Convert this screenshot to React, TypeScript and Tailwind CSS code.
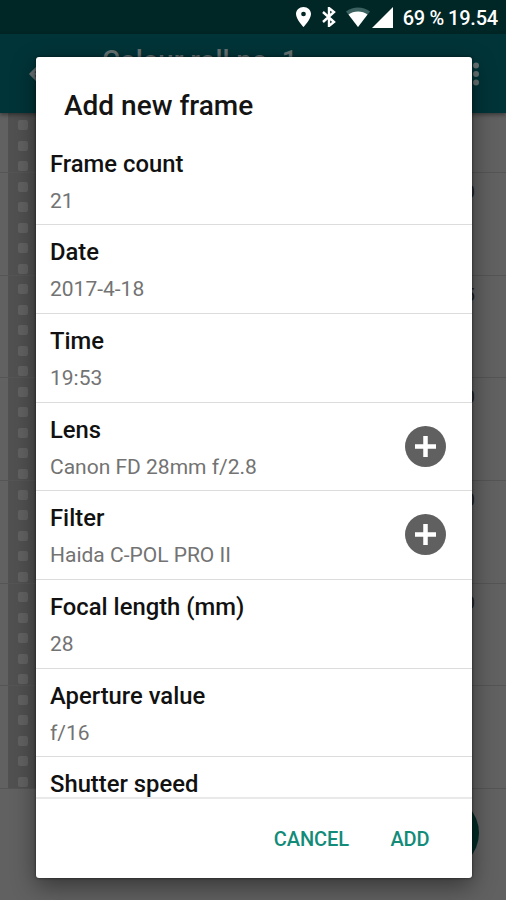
import { ReactNode } from "react";

interface Field {
	label: string;
	value: string;
	addable?: boolean;
}

const fields: Field[] = [
	{ label: "Frame count", value: "21" },
	{ label: "Date", value: "2017-4-18" },
	{ label: "Time", value: "19:53" },
	{ label: "Lens", value: "Canon FD 28mm f/2.8", addable: true },
	{ label: "Filter", value: "Haida C-POL PRO II", addable: true },
	{ label: "Focal length (mm)", value: "28" },
	{ label: "Aperture value", value: "f/16" },
	{ label: "Shutter speed", value: "" },
];

const frameDigits = ["0", "5", "0", "0", "0", ""];

function StatusBar() {
	return (
		<div className="flex h-[34px] items-center justify-end bg-[#002625] pr-2 text-white">
			<svg className="mr-[11px] h-[20px] w-[15px]" viewBox="5 2 14 20" preserveAspectRatio="none" fill="currentColor">
				<path d="M12 2C8.1 2 5 5.1 5 9c0 5.3 7 13 7 13s7-7.700 7-13c0-3.900-3.100-7-7-7zm0 9.200a2.200 2.200 0 1 1 0-4.400 2.200 2.200 0 0 1 0 4.400z" />
			</svg>
			<svg className="mr-[10px] h-[20px] w-[14px]" viewBox="5 2 14 20" preserveAspectRatio="none" fill="none" stroke="currentColor" strokeWidth="2.4">
				<path d="M6 7l11 10-5 4v-18L17 7 6 17" />
			</svg>
			<svg className="mr-[2px] h-[20px] w-[24px]" viewBox="0 0 24 20">
				<path d="M0 4.500C7-1 17-1 24 4.500L12 20z" fill="#3b6260" />
				<path d="M2.500 7.500c5-4 14-4 19 0L12 20z" fill="currentColor" />
			</svg>
			<svg className="mr-[10px] h-[21px] w-[21px]" viewBox="0 0 21 21" fill="currentColor">
				<path d="M21 0v21H0z" />
			</svg>
			<span className="pt-[1px] text-[20px] leading-none font-medium tracking-[-0.3px]">69 %</span>
			<span className="ml-[4px] pt-[1px] text-[20px] leading-none font-medium tracking-[-0.2px]">19.54</span>
		</div>
	);
}

function AppBar() {
	return (
		<div className="relative z-10 flex h-[79px] items-center bg-[#003438] text-[#687273] shadow-[0_2px_4px_rgba(0,0,0,0.4)]">
			<svg className="ml-[28px] h-6 w-6" viewBox="0 0 24 24" fill="none" stroke="currentColor" strokeWidth="3">
				<path d="M24 12H3M12 3l-9 9 9 9" />
			</svg>
			<h1 className="mb-[26px] ml-[50px] text-[27.6px] leading-8 font-medium whitespace-nowrap">
				Colour roll no. 1
			</h1>
			<svg className="mr-[26px] ml-auto h-6 w-[8px]" viewBox="0 0 8 24" fill="currentColor">
				<circle cx="4" cy="3.500" r="3" />
				<circle cx="4" cy="12" r="3" />
				<circle cx="4" cy="20.500" r="3" />
			</svg>
		</div>
	);
}

function FilmRow({ digit, first }: { digit: string; first?: boolean }) {
	return (
		<div
			className={
				first
					? "flex h-[60px] shrink-0 items-end border-b border-[#555555]"
					: "flex h-[102.65px] shrink-0 items-end border-b border-[#555555]"
			}
		>
			<div className="ml-[8px] flex h-full w-[36px] flex-col items-center justify-end gap-[10.5px] overflow-hidden bg-[#515151] pr-[7px] pb-[1px]">
				{(first ? [0, 1, 2] : [0, 1, 2, 3, 4]).map((i) => (
					<span key={i} className="size-[10px] shrink-0 rounded-[2px] bg-[#626262]" />
				))}
			</div>
			<span className="mr-[31px] ml-auto self-start pt-[8px] text-[19px] leading-[22px] text-[#202020]">
				{digit}
			</span>
		</div>
	);
}

function PlusIcon() {
	return (
		<svg className="size-[41px]" viewBox="0 0 41 41">
			<circle cx="20.500" cy="20.500" r="20.500" fill="#606060" />
			<path d="M20.500 10v21M10 20.500h21" stroke="white" strokeWidth="4.500" />
		</svg>
	);
}

function FieldRow({ field }: { field: Field }) {
	return (
		<div className="flex h-[88.65px] shrink-0 items-start justify-between border-b border-[#dcdcdc] pr-[25.5px] pl-[14px]">
			<div>
				<div className="pt-[13px] text-[23.8px] leading-[28px] font-medium text-[#111111]">{field.label}</div>
				<div className="mt-[11px] text-[21px] leading-[24px] text-[#737373]">{field.value}</div>
			</div>
			{field.addable && (
				<button className="mt-[23px]" aria-label={"Add " + field.label}>
					<PlusIcon />
				</button>
			)}
		</div>
	);
}

function DialogButton({ children }: { children: ReactNode }) {
	return <button className="text-[20px] leading-6 font-medium tracking-[-0.1px] text-[#128b78]">{children}</button>;
}

function FrameDialog() {
	return (
		<div className="absolute top-[57px] left-[36px] z-20 flex h-[821px] w-[435.5px] flex-col overflow-hidden rounded-[3px] bg-white shadow-[0_8px_24px_rgba(0,0,0,0.45),0_0_3px_rgba(0,0,0,0.6)]">
			<h2 className="h-[79.75px] shrink-0 pt-[32px] pl-[28px] text-[28px] leading-[34px] font-medium text-[#141414]">
				Add new frame
			</h2>
			<div className="flex h-[662.25px] shrink-0 flex-col overflow-hidden border-b-2 border-[#e9e9e9]">
				{fields.map((field) => (
					<FieldRow key={field.label} field={field} />
				))}
			</div>
			<div className="flex flex-1 items-center justify-end gap-[41.5px] pr-[42px]">
				<DialogButton>CANCEL</DialogButton>
				<DialogButton>ADD</DialogButton>
			</div>
		</div>
	);
}

export default function App() {
	return (
		<div className="relative h-[900px] w-[506px] overflow-hidden bg-[#616161] font-[Roboto,sans-serif]">
			<StatusBar />
			<AppBar />
			<FilmRow digit="" first />
			{frameDigits.map((digit, i) => (
				<FilmRow key={i} digit={digit} />
			))}
			<div className="absolute right-[27px] bottom-[29px] size-[76px] rounded-full bg-[#002b27]" />
			<FrameDialog />
		</div>
	);
}
